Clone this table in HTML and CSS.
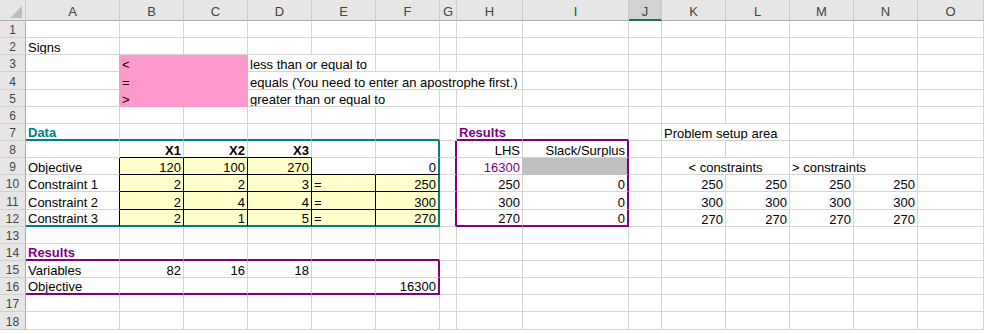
FILE: index.html
```html
<!DOCTYPE html>
<html lang="en">
<head>
<meta charset="utf-8">
<title>LP model</title>
<link rel="stylesheet" href="styles.css">
</head>
<body>
<div class="sheet">
  <!-- column headings -->
  <div class="hd corner"><svg width="26" height="21" viewBox="0 0 26 21"><polygon points="22,6 22,18 10,18" fill="#bcbcbc"/></svg></div>
  <div class="hd">A</div><div class="hd">B</div><div class="hd">C</div><div class="hd">D</div><div class="hd">E</div>
  <div class="hd">F</div><div class="hd">G</div><div class="hd">H</div><div class="hd">I</div><div class="hd sel">J</div>
  <div class="hd">K</div><div class="hd">L</div><div class="hd">M</div><div class="hd">N</div><div class="hd">O</div>

  <!-- row 1 -->
  <div class="c rh">1</div>
  <div class="c"></div><div class="c"></div><div class="c"></div><div class="c"></div><div class="c"></div>
  <div class="c"></div><div class="c"></div><div class="c"></div><div class="c"></div><div class="c"></div>
  <div class="c"></div><div class="c"></div><div class="c"></div><div class="c"></div><div class="c"></div>

  <!-- row 2 -->
  <div class="c rh">2</div>
  <div class="c">Signs</div><div class="c"></div><div class="c"></div><div class="c"></div><div class="c"></div>
  <div class="c"></div><div class="c"></div><div class="c"></div><div class="c"></div><div class="c"></div>
  <div class="c"></div><div class="c"></div><div class="c"></div><div class="c"></div><div class="c"></div>

  <!-- row 3 -->
  <div class="c rh">3</div>
  <div class="c edge-pink"></div><div class="c pink">&lt;</div><div class="c pink"></div>
  <div class="c span2">less than or equal to</div>
  <div class="c"></div><div class="c"></div><div class="c"></div><div class="c"></div><div class="c"></div>
  <div class="c"></div><div class="c"></div><div class="c"></div><div class="c"></div><div class="c"></div>

  <!-- row 4 -->
  <div class="c rh">4</div>
  <div class="c edge-pink"></div><div class="c pink">=</div><div class="c pink"></div>
  <div class="c span5">equals (You need to enter an apostrophe first.)</div>
  <div class="c"></div><div class="c"></div><div class="c"></div><div class="c"></div><div class="c"></div>
  <div class="c"></div><div class="c"></div>

  <!-- row 5 -->
  <div class="c rh">5</div>
  <div class="c edge-pink"></div><div class="c pink">&gt;</div><div class="c pink"></div>
  <div class="c span3">greater than or equal to</div>
  <div class="c"></div><div class="c"></div><div class="c"></div><div class="c"></div><div class="c"></div>
  <div class="c"></div><div class="c"></div><div class="c"></div><div class="c"></div>

  <!-- row 6 -->
  <div class="c rh">6</div>
  <div class="c"></div><div class="c"></div><div class="c"></div><div class="c"></div><div class="c"></div>
  <div class="c"></div><div class="c"></div><div class="c"></div><div class="c"></div><div class="c"></div>
  <div class="c"></div><div class="c"></div><div class="c"></div><div class="c"></div><div class="c"></div>

  <!-- row 7 -->
  <div class="c rh">7</div>
  <div class="c bb-t teal b">Data</div><div class="c bb-t"></div><div class="c bb-t"></div><div class="c bb-t"></div>
  <div class="c bb-t"></div><div class="c bb-t"></div>
  <div class="c"></div>
  <div class="c bb-p purple b">Results</div><div class="c bb-p"></div>
  <div class="c"></div>
  <div class="c span2">Problem setup area</div>
  <div class="c"></div><div class="c"></div><div class="c"></div>

  <!-- row 8 -->
  <div class="c rh">8</div>
  <div class="c"></div>
  <div class="c r b bb-k">X1</div><div class="c r b bb-k">X2</div><div class="c r b bb-k">X3</div>
  <div class="c"></div><div class="c br-t"></div>
  <div class="c br-p"></div>
  <div class="c r">LHS</div><div class="c r br-p">Slack/Surplus</div>
  <div class="c"></div><div class="c"></div><div class="c"></div><div class="c"></div><div class="c"></div><div class="c"></div>

  <!-- row 9 -->
  <div class="c rh">9</div>
  <div class="c br-k">Objective</div>
  <div class="c r yel">120</div><div class="c r yel">100</div><div class="c r yel">270</div>
  <div class="c bb-k"></div><div class="c r bb-k br-t">0</div>
  <div class="c br-p"></div>
  <div class="c r purple br-gray">16300</div><div class="c gray br-p"></div>
  <div class="c"></div>
  <div class="c span2 ctr">&lt; constraints</div>
  <div class="c span2">&gt; constraints</div>
  <div class="c"></div>

  <!-- row 10 -->
  <div class="c rh">10</div>
  <div class="c br-k">Constraint 1</div>
  <div class="c r yel">2</div><div class="c r yel">2</div><div class="c r yel">3</div>
  <div class="c yel">=</div><div class="c r yel br-t">250</div>
  <div class="c br-p"></div>
  <div class="c r">250</div><div class="c r br-p">0</div>
  <div class="c"></div>
  <div class="c r">250</div><div class="c r">250</div><div class="c r">250</div><div class="c r">250</div>
  <div class="c"></div>

  <!-- row 11 -->
  <div class="c rh">11</div>
  <div class="c br-k">Constraint 2</div>
  <div class="c r yel">2</div><div class="c r yel">4</div><div class="c r yel">4</div>
  <div class="c yel">=</div><div class="c r yel br-t">300</div>
  <div class="c br-p"></div>
  <div class="c r">300</div><div class="c r br-p">0</div>
  <div class="c"></div>
  <div class="c r">300</div><div class="c r">300</div><div class="c r">300</div><div class="c r">300</div>
  <div class="c"></div>

  <!-- row 12 -->
  <div class="c rh">12</div>
  <div class="c br-k bb-t">Constraint 3</div>
  <div class="c r yel bb-t">2</div><div class="c r yel bb-t">1</div><div class="c r yel bb-t">5</div>
  <div class="c yel bb-t">=</div><div class="c r yel br-t bb-t">270</div>
  <div class="c br-p"></div>
  <div class="c r bb-p">270</div><div class="c r br-p bb-p">0</div>
  <div class="c"></div>
  <div class="c r">270</div><div class="c r">270</div><div class="c r">270</div><div class="c r">270</div>
  <div class="c"></div>

  <!-- row 13 -->
  <div class="c rh">13</div>
  <div class="c"></div><div class="c"></div><div class="c"></div><div class="c"></div><div class="c"></div>
  <div class="c"></div><div class="c"></div><div class="c"></div><div class="c"></div><div class="c"></div>
  <div class="c"></div><div class="c"></div><div class="c"></div><div class="c"></div><div class="c"></div>

  <!-- row 14 -->
  <div class="c rh">14</div>
  <div class="c bb-p purple b">Results</div><div class="c bb-p"></div><div class="c bb-p"></div><div class="c bb-p"></div>
  <div class="c bb-p"></div><div class="c bb-p"></div>
  <div class="c"></div><div class="c"></div><div class="c"></div><div class="c"></div><div class="c"></div>
  <div class="c"></div><div class="c"></div><div class="c"></div><div class="c"></div>

  <!-- row 15 -->
  <div class="c rh">15</div>
  <div class="c">Variables</div><div class="c r">82</div><div class="c r">16</div><div class="c r">18</div>
  <div class="c"></div><div class="c br-p"></div>
  <div class="c"></div><div class="c"></div><div class="c"></div><div class="c"></div><div class="c"></div>
  <div class="c"></div><div class="c"></div><div class="c"></div><div class="c"></div>

  <!-- row 16 -->
  <div class="c rh">16</div>
  <div class="c bb-p">Objective</div><div class="c bb-p"></div><div class="c bb-p"></div><div class="c bb-p"></div>
  <div class="c bb-p"></div><div class="c r bb-p br-p">16300</div>
  <div class="c"></div><div class="c"></div><div class="c"></div><div class="c"></div><div class="c"></div>
  <div class="c"></div><div class="c"></div><div class="c"></div><div class="c"></div>

  <!-- row 17 -->
  <div class="c rh">17</div>
  <div class="c"></div><div class="c"></div><div class="c"></div><div class="c"></div><div class="c"></div>
  <div class="c"></div><div class="c"></div><div class="c"></div><div class="c"></div><div class="c"></div>
  <div class="c"></div><div class="c"></div><div class="c"></div><div class="c"></div><div class="c"></div>

  <!-- row 18 -->
  <div class="c rh">18</div>
  <div class="c"></div><div class="c"></div><div class="c"></div><div class="c"></div><div class="c"></div>
  <div class="c"></div><div class="c"></div><div class="c"></div><div class="c"></div><div class="c"></div>
  <div class="c"></div><div class="c"></div><div class="c"></div><div class="c"></div><div class="c"></div>
</div>
</body>
</html>
```

FILE: styles.css
```css
* {
  box-sizing: border-box;
}

html,
body {
  margin: 0;
  background: #ffffff;
}

body {
  font-family: "Liberation Sans", Arial, sans-serif;
  font-size: 13px;
  color: #000000;
}

/* worksheet grid: row-heading column + columns A..O */
.sheet {
  display: grid;
  grid-template-columns: 26px 94px 64px 64px 64px 64px 64px 17px 66px 106px 33px 64px 64px 64px 64px 66px;
  grid-template-rows: 21px repeat(18, 17.15px);
  width: 984px;
  overflow: hidden;
}

/* column headings */
.hd {
  display: flex;
  align-items: flex-end;
  justify-content: center;
  padding-bottom: 2px;
  line-height: 13px;
  background: #e6e6e6;
  color: #444444;
  border-right: 1px solid #cacaca;
  border-bottom: 1px solid #ababab;
}

.corner {
  padding: 0;
  display: block;
}

.corner svg {
  display: block;
}

.hd.sel {
  background: #d2d2d2;
  border-bottom: 2px solid #217346;
  padding-bottom: 1px;
}

/* cells */
.c {
  display: flex;
  align-items: flex-end;
  min-width: 0;
  padding: 0 2px;
  line-height: 13px;
  white-space: nowrap;
  overflow: hidden;
  border-right: 1px solid #d4d4d4;
  border-bottom: 1px solid #d4d4d4;
}

/* row headings */
.rh {
  justify-content: center;
  background: #e6e6e6;
  color: #444444;
  font-size: 12px;
  border-right-color: #ababab;
  border-bottom-color: #d0d0d0;
}

.r { justify-content: flex-end; }
.ctr { justify-content: center; }
.b { font-weight: bold; }
.span2 { grid-column: span 2; }
.span3 { grid-column: span 3; }
.span5 { grid-column: span 5; }

.teal { color: #008080; }
.purple { color: #800080; }

/* fills */
.pink {
  background: #ff99cc;
  border-right-color: #ff99cc;
  border-bottom-color: #ff99cc;
}

.edge-pink { border-right-color: #ff99cc; }

.yel {
  background: #ffffcc;
  border-right-color: #000000;
  border-bottom-color: #000000;
}

.gray {
  background: #c0c0c0;
  border-bottom-color: #c0c0c0;
}

.br-gray { border-right-color: #c0c0c0; }

/* thin black edges */
.bb-k { border-bottom-color: #000000; }
.br-k { border-right-color: #000000; }

/* medium range outlines */
.bb-t { border-bottom: 2px solid #008080; }
.br-t { border-right: 2px solid #008080; }
.bb-p { border-bottom: 2px solid #800080; }
.br-p { border-right: 2px solid #800080; }
```
